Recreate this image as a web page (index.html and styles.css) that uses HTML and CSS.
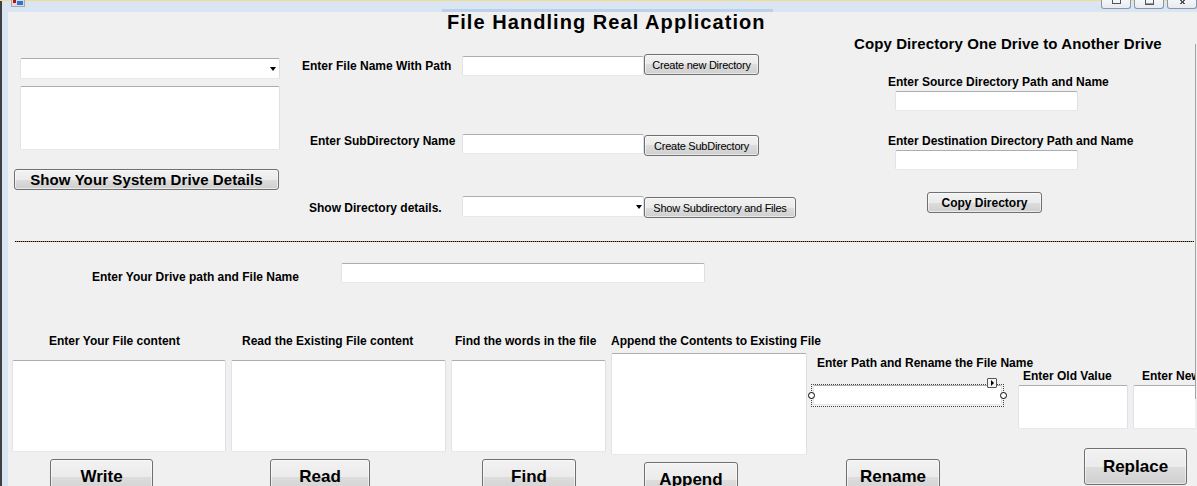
FILE: index.html
```html
<!DOCTYPE html>
<html>
<head>
<meta charset="utf-8">
<title>File Handling Real Application</title>
<link rel="stylesheet" href="styles.css">
</head>
<body>
<div class="screen">
  <div class="titlebar">
    <div class="app-icon"><span class="ic-red"></span><span class="ic-blue"></span></div>
    <div class="title-band"></div>
    <div class="win-btns">
      <span class="wb"><span class="g-min"></span></span>
      <span class="wb"><span class="g-max"></span></span>
      <span class="wb"><span class="g-close"></span></span>
    </div>
  </div>
  <div class="main">
    <div class="frame-left"></div>
    <div class="form">
      <div class="top">
        <div class="col-a">
          <div class="combo combo-a"><span class="arrow"></span></div>
          <div class="tb listbox"></div>
          <button class="btn btn-drive">Show Your System Drive Details</button>
        </div>
        <div class="col-b">
          <h1 class="title">File Handling Real Application</h1>
          <div class="row row1">
            <span class="lbl lbl1">Enter File Name With Path</span>
            <div class="tb tb-mid tb-r1"></div>
            <button class="btn sm btn-newdir">Create new Directory</button>
          </div>
          <div class="row row2">
            <span class="lbl lbl2">Enter SubDirectory Name</span>
            <div class="tb tb-mid"></div>
            <button class="btn sm btn-subdir">Create SubDirectory</button>
          </div>
          <div class="row row3">
            <span class="lbl lbl3">Show Directory details.</span>
            <div class="combo combo-b"><span class="arrow"></span></div>
            <button class="btn sm btn-showsub">Show Subdirectory and Files</button>
          </div>
        </div>
        <div class="col-c">
          <div class="copy-head">Copy Directory One Drive to Another Drive</div>
          <span class="lbl c-lbl c-lbl1">Enter Source Directory Path and Name</span>
          <div class="tb c-tb"></div>
          <span class="lbl c-lbl c-lbl2">Enter Destination Directory Path and Name</span>
          <div class="tb c-tb"></div>
          <button class="btn b12 btn-copy">Copy Directory</button>
        </div>
      </div>
      <div class="sep"></div>
      <div class="drive-row">
        <span class="lbl drive-lbl">Enter Your Drive path and File Name</span>
        <div class="tb drive-tb"></div>
      </div>
      <div class="bottom">
        <div class="bcol col1">
          <span class="lbl l1">Enter Your File content</span>
          <div class="tb ta ta1"></div>
          <button class="btn big b1">Write</button>
        </div>
        <div class="bcol col2">
          <span class="lbl l2">Read the Existing File content</span>
          <div class="tb ta ta2"></div>
          <button class="btn big b2">Read</button>
        </div>
        <div class="bcol col3">
          <span class="lbl l3">Find the words in the file</span>
          <div class="tb ta ta3"></div>
          <button class="btn big b3">Find</button>
        </div>
        <div class="bcol col4">
          <span class="lbl l4">Append the Contents to Existing File</span>
          <div class="tb ta4"></div>
          <button class="btn big b4">Append</button>
        </div>
        <div class="bcol col5">
          <span class="lbl l5">Enter Path and Rename the File Name</span>
          <div class="tb rename-tb">
            <span class="sel-box"></span>
            <span class="handle h-left"></span>
            <span class="handle h-right"></span>
            <span class="smart-tag"><span class="st-arrow"></span></span>
          </div>
          <button class="btn big b5">Rename</button>
        </div>
        <div class="bcol col6">
          <span class="lbl l6">Enter Old Value</span>
          <div class="tb ta-small"></div>
          <button class="btn big b6">Replace</button>
        </div>
        <div class="bcol col7">
          <span class="lbl l7">Enter New Value</span>
          <div class="tb ta-small"></div>
        </div>
      </div>
    </div>
    <div class="edge"><div class="edge-line"></div></div>
  </div>
</div>
</body>
</html>
```

FILE: styles.css
```css
* { box-sizing: border-box; margin: 0; padding: 0; }
html, body { margin: 0; background: #f0f0f0; }
body { font-family: "Liberation Sans", Arial, sans-serif; color: #000; }

.screen {
  width: 1197px; height: 486px; overflow: hidden;
  display: flex; flex-direction: column;
  background: linear-gradient(90deg, #3f3f3f 0 2px, #d9e5f3 2px);
}

/* ---- title bar ---- */
.titlebar {
  height: 12px; flex-shrink: 0;
  border-top: 1px solid #f5dc8c;
  display: flex; align-items: flex-start;
}
.app-icon {
  margin-left: 11px; width: 14px; height: 7px; margin-top: -1px;
  border: 1px solid #a9a9a9; border-top: none; background: #dcdcdc;
  display: flex; gap: 1px; padding: 0 1px;
}
.ic-red { width: 4px; height: 3px; background: #b3140c; align-self: flex-start; }
.ic-blue { width: 7px; height: 4px; background: #3172d8; align-self: flex-end; margin-bottom: 1px; }
.title-band { margin-left: 417px; width: 331px; height: 3px; background: #bcd0e9; align-self: flex-end; }
.win-btns { margin-left: auto; display: flex; gap: 3px; margin-top: -1px; }
.wb {
  width: 30px; height: 9px;
  border: 1px solid #8b95a3; border-top: none; border-radius: 0 0 3px 3px;
  background: linear-gradient(#f4f6f9, #e6ebf1);
  display: flex; justify-content: center; align-items: flex-start;
}
.g-min { width: 9px; height: 4px; border: 1px solid #555; border-top: none; }
.g-max { width: 9px; height: 5px; border: 1px solid #555; border-top: none; box-shadow: inset 0 -1px 0 #999; }
.g-close { width: 9px; height: 4px; background: linear-gradient(45deg, transparent 42%, #555 42% 58%, transparent 58%), linear-gradient(-45deg, transparent 42%, #555 42% 58%, transparent 58%); }

/* ---- window body ---- */
.main { flex: 1; display: flex; min-height: 0; }
.frame-left { width: 8px; flex-shrink: 0; }
.form { width: 1187px; flex-shrink: 0; background: #f0f0f0; overflow: hidden; }
.edge { flex: 1; background: #f0f0f0; }
.edge-line { margin-top: 32px; height: 355px; border-left: 1px solid #a3a3a3; }

/* ---- controls ---- */
.tb {
  background: #fff; flex-shrink: 0;
  border: 1px solid; border-color: #abadb3 #dbdfe6 #e3e9ef #e2e3ea;
  border-radius: 2px;
}
.combo {
  background: #fff; flex-shrink: 0; height: 21px;
  border: 1px solid; border-color: #abadb3 #dbdfe6 #e3e9ef #e2e3ea;
  border-radius: 2px;
  display: flex; justify-content: flex-end; align-items: center;
}
.arrow { width: 0; height: 0; border-left: 3.5px solid transparent; border-right: 3.5px solid transparent; border-top: 4px solid #000; }
.btn {
  font-family: inherit; color: #000; flex-shrink: 0; padding: 0;
  border: 1px solid #707070; border-radius: 3px;
  background: linear-gradient(#f2f2f2 0%, #ebebeb 50%, #dddddd 50%, #cfcfcf 100%);
  box-shadow: inset 0 0 0 1px rgba(255, 255, 255, 0.55);
  display: flex; align-items: center; justify-content: center;
  white-space: nowrap;
}
.sm { font-size: 11px; letter-spacing: -0.25px; height: 21px; }
.b12 { font-size: 12px; font-weight: bold; height: 21px; }
.big { font-size: 17px; font-weight: bold; height: 36px; }
.lbl { font-size: 12px; font-weight: bold; line-height: 14px; white-space: nowrap; flex-shrink: 0; }

/* ---- top area ---- */
.top { height: 229px; display: flex; }
.col-a { width: 282px; flex-shrink: 0; padding-left: 6px; display: flex; flex-direction: column; align-items: flex-start; }
.combo-a { margin-top: 46px; margin-left: 6px; width: 260px; padding-right: 3px; }
.listbox { margin-top: 7px; margin-left: 6px; width: 260px; height: 64px; }
.btn-drive { margin-top: 19px; width: 265px; height: 21px; font-size: 15px; font-weight: bold; letter-spacing: 0.1px; }

.col-b { width: 540px; flex-shrink: 0; }
.title { margin-left: 157px; font-size: 20px; line-height: 20px; font-weight: bold; letter-spacing: 1.05px; white-space: nowrap; }
.row { display: flex; align-items: flex-start; }
.row1 { margin-top: 22px; margin-left: 12px; }
.row2 { margin-top: 58px; margin-left: 20px; }
.row3 { margin-top: 40px; margin-left: 19px; }
.lbl1 { width: 160px; margin-top: 5px; }
.lbl2 { width: 152px; }
.lbl3 { width: 153px; margin-top: 5px; }
.tb-mid { width: 182px; height: 20px; }
.tb-r1 { margin-top: 2px; }
.btn-newdir { width: 115px; }
.btn-subdir { width: 115px; margin-top: 1px; height: 21px; }
.combo-b { width: 182px; padding-right: 1px; }
.btn-showsub { width: 152px; margin-top: 1px; }

.col-c { flex: 1; display: flex; flex-direction: column; align-items: flex-start; }
.copy-head { margin-top: 23px; margin-left: 24px; font-size: 15px; line-height: 17px; font-weight: bold; letter-spacing: 0.1px; white-space: nowrap; }
.c-lbl { margin-left: 58px; margin-top: 23px; }
.c-tb { margin-left: 65px; margin-top: 2px; width: 183px; height: 20px; }
.btn-copy { margin-top: 22px; margin-left: 97px; width: 115px; }

.sep {
  margin-left: 7px; width: 1179px; height: 1px;
  background: repeating-linear-gradient(90deg, #000 0 1px, #9c8460 1px 2px);
}

/* ---- drive row ---- */
.drive-row { margin-top: 21px; margin-left: 84px; display: flex; align-items: flex-start; }
.drive-lbl { width: 249px; margin-top: 7px; }
.drive-tb { width: 364px; height: 20px; }

/* ---- bottom area ---- */
.bottom { margin-top: 50px; padding-left: 4px; display: flex; align-items: flex-start; }
.bcol { display: flex; flex-direction: column; align-items: flex-start; flex-shrink: 0; }
.ta { margin-top: 12px; height: 92px; }
.col1 { width: 214px; }
.l1 { margin-left: 37px; }
.ta1 { width: 214px; }
.b1 { margin-top: 7px; margin-left: 38px; width: 103px; }

.col2 { width: 215px; margin-left: 5px; }
.l2 { margin-left: 11px; }
.ta2 { width: 215px; }
.b2 { margin-top: 7px; margin-left: 39px; width: 100px; }

.col3 { width: 155px; margin-left: 5px; }
.l3 { margin-left: 4px; }
.ta3 { width: 155px; }
.b3 { margin-top: 7px; margin-left: 31px; width: 94px; }

.col4 { width: 200px; margin-left: 5px; }
.ta4 { margin-top: 5px; width: 196px; height: 102px; }
.b4 { margin-top: 7px; margin-left: 33px; width: 94px; }

.col5 { width: 207px; }
.l5 { margin-top: 22px; margin-left: 6px; }
.rename-tb { position: relative; margin-top: 15px; margin-left: 2px; width: 189px; height: 20px; }
.sel-box { position: absolute; left: -3px; right: -3px; top: -2px; bottom: -3px; border: 1px dotted #444; }
.handle { position: absolute; top: 6px; width: 7px; height: 7px; border: 1px solid #000; border-radius: 50%; background: #fff; }
.h-left { left: -6px; }
.h-right { left: 186px; }
.smart-tag {
  position: absolute; left: 173px; top: -8px; width: 10px; height: 10px;
  border: 1px solid #555; border-radius: 1px; background: #f4f4f4;
  display: flex; align-items: center; justify-content: center;
}
.st-arrow { width: 0; height: 0; border-top: 3px solid transparent; border-bottom: 3px solid transparent; border-left: 3px solid #000; margin-left: 1px; }
.b5 { margin-top: 54px; margin-left: 35px; width: 94px; }

.col6 { width: 110px; }
.l6 { margin-top: 35px; margin-left: 5px; }
.ta-small { margin-top: 2px; width: 110px; height: 44px; }
.b6 { margin-top: 19px; margin-left: 66px; width: 103px; height: 37px; }

.col7 { width: 110px; margin-left: 5px; }
.l7 { margin-top: 35px; margin-left: 9px; }
```
